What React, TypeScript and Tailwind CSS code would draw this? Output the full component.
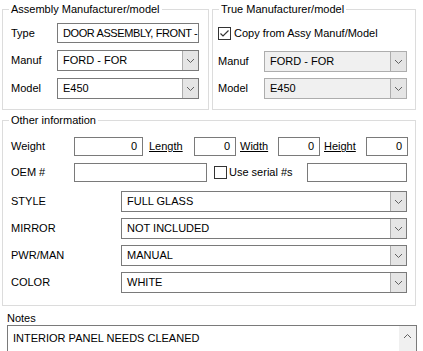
import React from 'react';

function Chevron({ up = false }: { up?: boolean }) {
  return (
    <svg width="9" height="6" viewBox="0 0 9 6" className={up ? 'rotate-180' : ''}>
      <path d="M1 1 L4.5 4.5 L8 1" fill="none" stroke="#606060" strokeWidth="1" />
    </svg>
  );
}

function Group({
  title,
  className,
  children,
}: {
  title: string;
  className: string;
  children: React.ReactNode;
}) {
  return (
    <div className={`relative border border-[#dcdcdc] ${className}`}>
      <span className="absolute -top-[8px] left-[6px] bg-white px-[2px] leading-[14px]">{title}</span>
      {children}
    </div>
  );
}

function Combo({
  value,
  className,
  disabled = false,
}: {
  value: string;
  className: string;
  disabled?: boolean;
}) {
  return (
    <div
      className={`flex border ${disabled ? 'border-[#adadad] bg-[#f0f0f0]' : 'border-[#7a7a7a] bg-white'} ${className}`}
    >
      <div className="flex flex-1 items-center pl-[5px]">{value}</div>
      <div className="flex w-[16px] items-center justify-center border-l border-[#adadad] bg-[#e5e5e5]">
        <Chevron />
      </div>
    </div>
  );
}

function Field({ value = '', className, right = false }: { value?: string; className: string; right?: boolean }) {
  return (
    <div
      className={`flex items-center overflow-hidden whitespace-nowrap border border-[#7a7a7a] bg-white ${right ? 'justify-end pr-[5px]' : 'pl-[5px]'} ${className}`}
    >
      {value}
    </div>
  );
}

function Check({ checked }: { checked: boolean }) {
  return (
    <svg width="13" height="13" viewBox="0 0 13 13">
      <rect x="0.5" y="0.5" width="12" height="12" fill="white" stroke="#333" />
      {checked && <path d="M2.5 6.5 L5 9 L10.5 3.5" fill="none" stroke="#333" strokeWidth="1.2" />}
    </svg>
  );
}

export default function App() {
  const lists = [
    ['STYLE', 'FULL GLASS'],
    ['MIRROR', 'NOT INCLUDED'],
    ['PWR/MAN', 'MANUAL'],
    ['COLOR', 'WHITE'],
  ];

  return (
    <div
      className="h-[351px] w-[423px] overflow-hidden bg-white text-[11px] text-black"
      style={{ fontFamily: '"Liberation Sans", Arial, sans-serif' }}
    >
      <div className="flex gap-[3px] pl-[2px] pt-[9px]">
        <Group title="Assembly Manufacturer/model" className="h-[101px] w-[207px]">
          <div className="flex flex-col gap-[7px] pl-[8px] pr-[9px] pt-[13px]">
            <div className="flex h-[20px] items-center">
              <span className="w-[46px]">Type</span>
              <Field value="DOOR ASSEMBLY, FRONT -" className="h-[20px] flex-1 tracking-[-0.4px]" />
            </div>
            <div className="flex h-[21px] items-center">
              <span className="w-[46px]">Manuf</span>
              <Combo value="FORD - FOR" className="h-[21px] flex-1" />
            </div>
            <div className="flex h-[21px] items-center">
              <span className="w-[46px]">Model</span>
              <Combo value="E450" className="h-[21px] flex-1" />
            </div>
          </div>
        </Group>
        <Group title="True Manufacturer/model" className="h-[101px] w-[204px]">
          <div className="flex flex-col pl-[5px] pr-[8px] pt-[17px]">
            <div className="flex h-[13px] items-center gap-[3px]">
              <Check checked />
              <span>Copy from Assy Manuf/Model</span>
            </div>
            <div className="mt-[11px] flex h-[21px] items-center">
              <span className="w-[46px]">Manuf</span>
              <Combo value="FORD - FOR" className="h-[21px] flex-1" disabled />
            </div>
            <div className="mt-[6px] flex h-[21px] items-center">
              <span className="w-[46px]">Model</span>
              <Combo value="E450" className="h-[21px] flex-1" disabled />
            </div>
          </div>
        </Group>
      </div>

      <div className="pl-[2px] pt-[10px]">
        <Group title="Other information" className="h-[186px] w-[414px]">
          <div className="flex flex-col pl-[8px] pt-[16px]">
            <div className="flex h-[19px] items-center">
              <span className="w-[63px]">Weight</span>
              <Field value="0" right className="h-[19px] w-[69px]" />
              <span className="ml-[6px] w-[45px] underline">Length</span>
              <Field value="0" right className="h-[19px] w-[42px]" />
              <span className="ml-[4px] w-[38px] underline">Width</span>
              <Field value="0" right className="h-[19px] w-[42px]" />
              <span className="ml-[4px] w-[42px] underline">Height</span>
              <Field value="0" right className="h-[19px] w-[42px]" />
            </div>
            <div className="mt-[7px] flex h-[19px] items-center">
              <span className="w-[63px]">OEM #</span>
              <Field className="h-[19px] w-[133px]" />
              <span className="ml-[7px] flex items-center gap-[2px]">
                <Check checked={false} />
                <span>Use serial #s</span>
              </span>
              <Field className="ml-auto mr-[8px] h-[19px] w-[100px]" />
            </div>
            <div className="mt-[9px] flex flex-col gap-[6px] pr-[8px]">
              {lists.map(([label, value]) => (
                <div key={label} className="flex h-[21px] items-center">
                  <span className="w-[110px]">{label}</span>
                  <Combo value={value} className="h-[21px] flex-1" />
                </div>
              ))}
            </div>
          </div>
        </Group>
      </div>

      <div className="pl-[7px] pt-[7px]">
        <div className="leading-[11px]">Notes</div>
        <div className="mt-[1px] flex h-[40px] w-[410px] border border-[#7a7a7a]">
          <div className="flex-1 pl-[5px] pt-[4px]">INTERIOR PANEL NEEDS CLEANED</div>
          <div className="flex w-[17px] justify-center bg-[#f0f0f0] pt-[7px]">
            <Chevron up />
          </div>
        </div>
      </div>
    </div>
  );
}
